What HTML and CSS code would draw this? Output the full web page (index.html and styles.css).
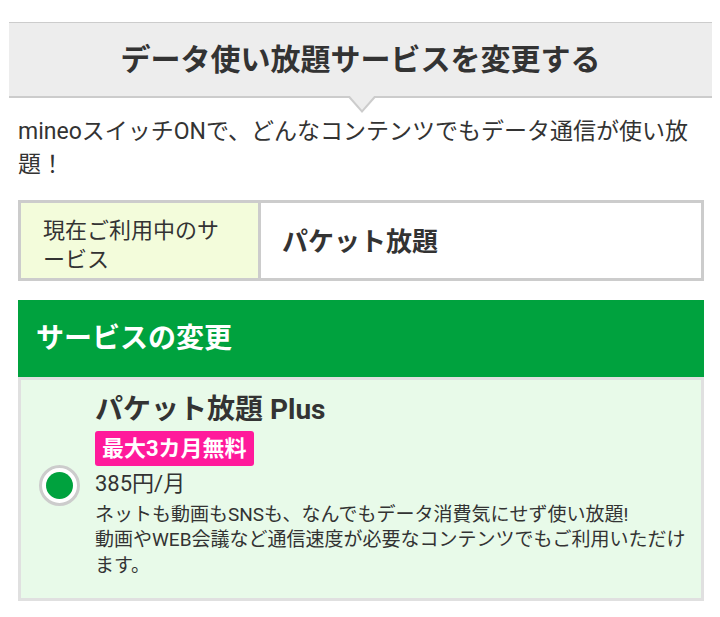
FILE: index.html
```html
<!DOCTYPE html>
<html lang="ja">
<head>
<meta charset="utf-8">
<title>データ使い放題サービスを変更する</title>
<link rel="stylesheet" href="styles.css">
</head>
<body>
<div class="page">
  <h2 class="sec-title">データ使い放題サービスを変更する</h2>
  <div class="content">
    <p class="lead">mineoスイッチONで、どんなコンテンツでもデータ通信が使い放題！</p>
    <div class="current">
      <div class="current-label">現在ご利用中のサービス</div>
      <div class="current-value">パケット放題</div>
    </div>
    <section class="change">
      <h3 class="change-head">サービスの変更</h3>
      <label class="plan">
        <span class="radio"><span class="radio-dot"></span></span>
        <div class="plan-body">
          <div class="plan-name">パケット放題 Plus</div>
          <div class="plan-badge-row"><span class="plan-badge">最大3カ月無料</span></div>
          <div class="plan-price">385円/月</div>
          <p class="plan-desc">ネットも動画もSNSも、なんでもデータ消費気にせず使い放題!<br>動画やWEB会議など通信速度が必要なコンテンツでもご利用いただけます。</p>
        </div>
      </label>
    </section>
  </div>
</div>
</body>
</html>
```

FILE: styles.css
```css
* { box-sizing: border-box; }

body {
  margin: 0;
  background: #fff;
  color: #333;
  font-family: Roboto, "Noto Sans CJK JP", sans-serif;
}

.page {
  width: 720px;
  padding-top: 22px;
}

.sec-title {
  position: relative;
  margin: 0 0 0 9px;
  width: 703px;
  height: 76px;
  border-top: 1px solid #ccc;
  border-bottom: 2px solid #ccc;
  background: #ededed;
  font-size: 30px;
  font-weight: 700;
  line-height: 73px;
  text-align: center;
  color: #333;
}

.sec-title::before,
.sec-title::after {
  content: "";
  position: absolute;
  width: 0;
  height: 0;
  border-style: solid;
  border-color: transparent;
}

.sec-title::before {
  left: 338px;
  top: 100%;
  border-width: 17px 15px 0 15px;
  border-top-color: #ccc;
}

.sec-title::after {
  left: 340px;
  top: calc(100% - 1px);
  border-width: 15px 13px 0 13px;
  border-top-color: #ededed;
}

.content {
  padding: 0 16px 0 18px;
}

.lead {
  margin: 17px 0 0;
  font-size: 23px;
  line-height: 33px;
}

.current {
  display: grid;
  grid-template-columns: 237px 1fr;
  margin-top: 19px;
  height: 81px;
  border: 3px solid #ccc;
}

.current-label {
  display: flex;
  align-items: center;
  padding: 9px 20px 0 22px;
  background: #f3fcdb;
  font-size: 22px;
  line-height: 29px;
}

.current-value {
  display: flex;
  align-items: center;
  padding: 0 0 2px 21px;
  border-left: 3px solid #ccc;
  font-size: 26px;
  font-weight: 700;
}

.change {
  margin-top: 19px;
}

.change-head {
  margin: 0;
  height: 77px;
  padding-left: 18px;
  background: #00a23e;
  color: #fff;
  font-size: 28px;
  font-weight: 700;
  line-height: 77px;
}

.plan {
  display: flex;
  align-items: center;
  gap: 15px;
  height: 224px;
  padding: 12px 4px 20px 18px;
  border: 3px solid #e0e0e0;
  background: #e8fae9;
  cursor: pointer;
}

.radio {
  flex: none;
  display: flex;
  align-items: center;
  justify-content: center;
  width: 41px;
  height: 41px;
  border: 3px solid #ccc;
  border-radius: 50%;
  background: #fff;
}

.radio-dot {
  width: 27px;
  height: 27px;
  border-radius: 50%;
  background: #00a23e;
}

.plan-body {
  flex: 1;
}

.plan-name {
  font-size: 28px;
  font-weight: 700;
  line-height: 35px;
}

.plan-badge-row {
  margin-top: 4px;
}

.plan-badge {
  display: inline-block;
  padding: 4px 7px;
  border-radius: 3px;
  background: #ff1a9b;
  color: #fff;
  font-size: 22px;
  font-weight: 700;
  line-height: 27px;
}

.plan-price {
  margin-top: 4px;
  font-size: 22px;
  line-height: 28px;
}

.plan-desc {
  margin: 4px 0 0;
  font-size: 19px;
  line-height: 25.5px;
}
```
